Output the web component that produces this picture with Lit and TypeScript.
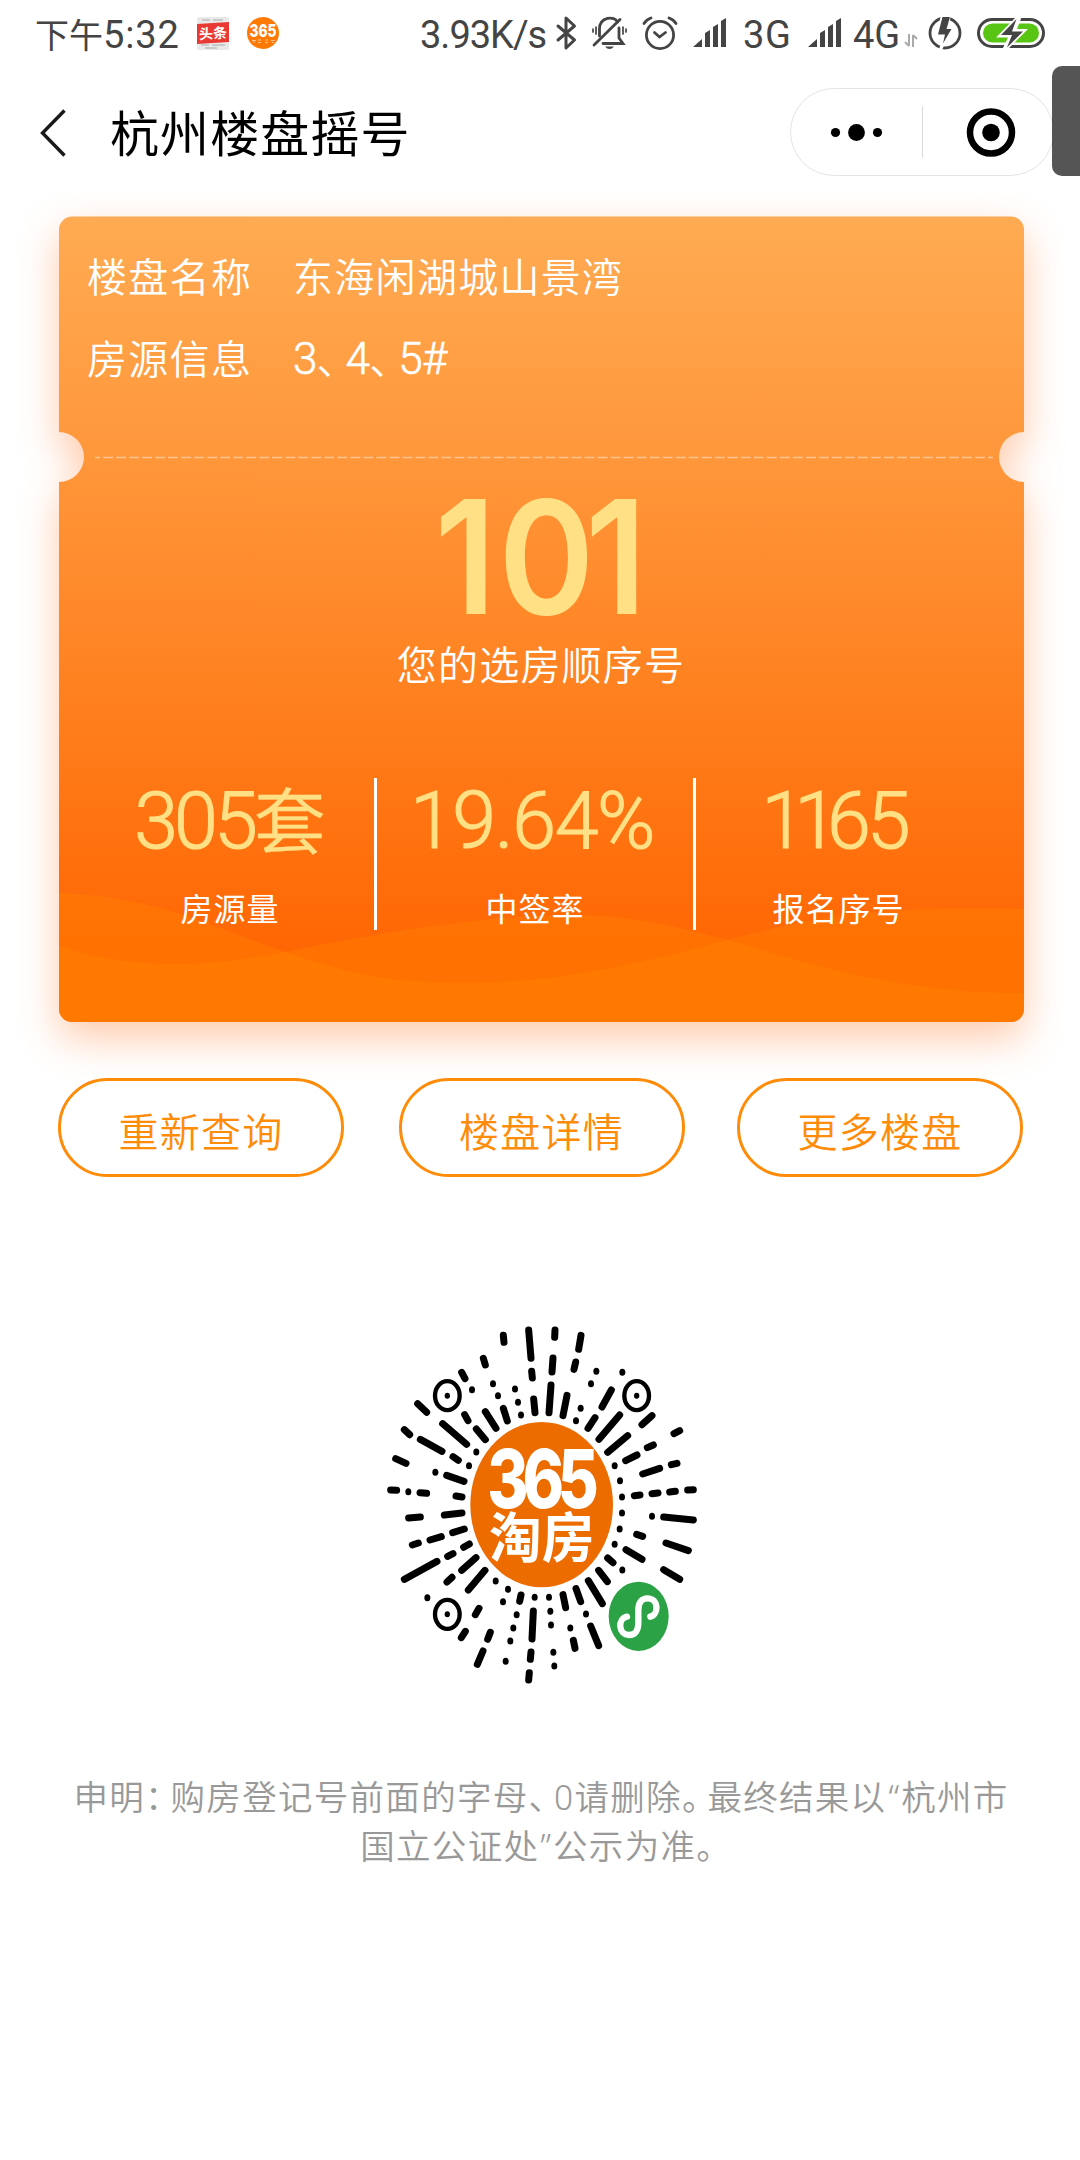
import { LitElement, html, svg, css } from "lit";
import { customElement } from "lit/decorators.js";

/* ---------- status bar ---------- */

@customElement("status-bar")
class StatusBar extends LitElement {
  static styles = css`
    :host { display: flex; height: 66px; box-sizing: border-box; align-items: center; padding-left: 35px; color: #444; font-family: Roboto, "Noto Sans CJK SC", sans-serif; font-size: 38px; line-height: 66px; }
    svg { display: block; flex: none; overflow: visible; }
    span { display: block; flex: none; white-space: nowrap; padding-top: 4px; }
    .time { width: 162px; letter-spacing: 0.9px; }
    .cn { display: inline; font-size: 34px; letter-spacing: 0; }
    .news { margin-right: 18px; }
    .speed { width: 136px; margin-left: 141px; letter-spacing: -1px; }
    .bt { margin-right: 15px; }
    .bell { margin-right: 15px; }
    .alarm { margin-right: 15px; }
    .net3 { width: 65px; margin-left: 16px; letter-spacing: 0.6px; }
    .net4 { width: 51px; margin-left: 11px; }
    .data { margin: 14px 10px 0 0; }
    .bolt { margin-right: 15px; }
  `;
  signal() {
    return html`<svg width="34" height="30" viewBox="0 0 34 30" fill="#444"><path d="M0 29L9 21V29ZM12 29V15L17 12V29ZM20 29V9L25 6V29ZM28 29V3L33 0V29Z" /></svg>`;
  }
  render() {
    return html`
      <span class="time"><span class="cn">下午</span>5:32</span>
      <svg class="news" width="32" height="33" viewBox="0 0 32 33">
        <rect width="32" height="33" rx="2" fill="#e9e9e9" />
        <path d="M5 3H13M16 3H26M4 28H12M15 28H28M8 31H20" stroke="#aaa" stroke-width="1.2" />
        <path d="M0 7L32 5V25L0 27Z" fill="#e83a33" />
        <text x="2" y="21.5" font-family="Noto Sans CJK SC, sans-serif" font-weight="700" font-size="14" fill="#fff" transform="rotate(-3 16 16)">头条</text>
      </svg>
      <svg width="32" height="32" viewBox="0 0 32 32">
        <circle cx="16" cy="16" r="16" fill="#ff7a05" />
        <text x="2.500" y="20" textLength="27" lengthAdjust="spacingAndGlyphs" font-family="Inter, sans-serif" font-weight="800" font-size="18" fill="#fff">365</text>
        <path d="M5 23.5H9M7 23.5V26M11 23H14M11 25.5H14M18 23H21M18 25.5H21M24 23.5H28M25 25.5H27" stroke="#ffc28a" stroke-width="1.1" />
      </svg>
      <span class="speed">3.93K/s</span>
      <svg class="bt" width="21" height="34" viewBox="0 0 21 34" fill="none" stroke="#444" stroke-width="3" stroke-linejoin="round" stroke-linecap="round"><path d="M2 10L18.500 24L10 32V2L18.500 10L2 24" /></svg>
      <svg class="bell" width="35" height="33" viewBox="0 0 35 33" fill="none" stroke="#444" stroke-width="2.8" stroke-linecap="round">
        <path d="M7.500 19V12C7.500 -0.500 23 -1.500 25.500 5M27 11V21L31 26.500H11" />
        <path d="M2 28L28 2.500" /><path d="M13 29.500H22Q20 32 17.500 32Q15 32 13 29.500Z" fill="#444" stroke="none" />
        <path d="M4 10V17M1 12V15M31 10V17M34 12V15" stroke-width="1.7" />
      </svg>
      <svg class="alarm" width="36" height="34" viewBox="0 0 36 34" fill="none" stroke="#444" stroke-width="2.8" stroke-linecap="round">
        <circle cx="18" cy="19" r="13.600" /><path d="M12.500 16.500L17.500 21L23.500 16.500M2 7.500Q4.500 3.500 9 2M34 7.500Q31.500 3.500 27 2" />
      </svg>
      ${this.signal()}
      <span class="net3">3G</span>
      ${this.signal()}
      <span class="net4">4G</span>
      <svg class="data" width="14" height="13" viewBox="0 0 14 13" fill="none" stroke="#aaa" stroke-width="2"><path d="M5 0V12M5 12L1 8M9 13V1M9 1L13 5" /></svg>
      <svg class="bolt" width="34" height="34" viewBox="0 0 34 34">
        <circle cx="17" cy="17" r="15" fill="none" stroke="#444" stroke-width="2.800" />
        <path d="M13 -1H23L20.500 11H25L14 34H11L14.500 20H8Z" fill="#fff" /><path d="M14.500 1H22L18.500 13H23.500L15 27.500L17 18.500H10Z" fill="#444" />
      </svg>
      <svg width="68" height="30" viewBox="0 0 68 30">
        <rect x="1.500" y="1.500" width="65" height="27" rx="13.500" fill="#fff" stroke="#444" stroke-width="3" />
        <rect x="6" y="5.500" width="56" height="19" rx="9.500" fill="#58c413" />
        <path d="M40 -2L19 19.500H31L25 32H30L51 11H40L45 -2Z" fill="#fff" /><path d="M39.500 1L24 17H35L30 29.500L46 13.500H35Z" fill="#444" />
      </svg>
    `;
  }
}

/* ---------- navigation bar ---------- */

@customElement("nav-bar")
class NavBar extends LitElement {
  static styles = css`
    :host { display: flex; height: 134px; align-items: center; padding-left: 40px; position: relative; box-sizing: border-box; }
    .back { flex: none; margin-right: 43px; }
    .title { flex: 1; font: 400 49px/1 "Noto Sans CJK SC", sans-serif; letter-spacing: 1.100px; color: #000; padding-bottom: 5px; }
    .capsule { flex: none; display: flex; align-items: center; width: 264px; height: 88px; box-sizing: border-box; border: 1px solid #e4e4e4; border-radius: 44px; margin-right: 26px; margin-bottom: 2px; }
    .tab { position: absolute; right: 0; top: 0; width: 28px; height: 110px; border-radius: 10px 0 0 10px; background: #555; }
  `;
  render() {
    return html`
      <svg class="back" width="27" height="48" viewBox="0 0 27 48" fill="none" stroke="#1a1a1a" stroke-width="3.400"><path d="M24.500 1.500L2.500 24L24.500 46.500" /></svg>
      <div class="title">杭州楼盘摇号</div>
      <div class="capsule">
        <svg width="262" height="86" viewBox="0 0 262 86">
          <circle cx="44.500" cy="43.500" r="4.600" /><circle cx="65.500" cy="43.500" r="8.400" /><circle cx="86.500" cy="43.500" r="4.600" />
          <rect x="131" y="17" width="1" height="52" fill="#d9d9d9" />
          <circle cx="200" cy="43.500" r="21" fill="none" stroke="#000" stroke-width="6.500" /><circle cx="200" cy="43.500" r="8.800" />
        </svg>
      </div>
      <div class="tab"></div>
    `;
  }
}

/* ---------- lottery ticket ---------- */

@customElement("lottery-ticket")
class LotteryTicket extends LitElement {
  static styles = css`
    :host { display: block; position: relative; height: 806px; margin: 16px 56px 0 59px; color: #fff; font-family: Roboto, "Noto Sans CJK SC", sans-serif; font-weight: 350; }
    .bg { position: absolute; left: 0; top: 0; overflow: visible; }
    .shape { filter: drop-shadow(0 16px 20px rgba(255, 115, 35, 0.38)); }
    .body { position: relative; height: 100%; display: flex; flex-direction: column; }
    .info { display: grid; grid-template-columns: 206px 1fr; grid-auto-rows: 82px; align-items: center; height: 241px; box-sizing: border-box; padding: 18px 0 0 28px; font-size: 40px; letter-spacing: 1.3px; }
    .houses { font-size: 44px; letter-spacing: -0.800px; -webkit-text-stroke: 0.600px #fff; }
    .comma { font-size: 40px; font-feature-settings: "halt"; letter-spacing: 9px; -webkit-text-stroke: 0; }
    .rank { text-align: center; }
    .number { font-family: Inter, sans-serif; font-weight: 600; font-size: 158px; line-height: 115px; height: 115px; margin-top: 42px; padding-right: 12px; color: #ffe085; letter-spacing: -10px; transform: scaleX(0.92); }
    .wide { letter-spacing: 3px; }
    .caption { font-size: 40px; letter-spacing: 1.200px; line-height: 50px; margin-top: 28px; padding-right: 1px; }
    .stats { display: flex; height: 152px; margin-top: 86px; }
    .stat { display: flex; flex-direction: column; align-items: center; box-sizing: border-box; }
    .stat + .stat { border-left: 3px solid #fff; }
    .s0 { width: 315px; padding-left: 27px; }
    .s1 { width: 319px; }
    .s2 { width: 320px; padding-right: 32px; }
    .value { font-size: 79px; line-height: 86px; height: 84px; letter-spacing: -4px; color: #ffe085; white-space: nowrap; -webkit-text-stroke: 1.200px #ffe085; }
    .rate { letter-spacing: -1.400px; padding-right: 6px; }
    .serial { padding-right: 9px; }
    .ones { letter-spacing: -11px; }
    .unit { font-size: 72px; letter-spacing: 0; -webkit-text-stroke: 0.400px #ffe085; }
    .label { font-size: 32px; letter-spacing: 1px; line-height: 40px; margin-top: 28px; font-weight: 400; }
  `;
  render() {
    return html`
      <svg class="bg" width="965" height="806" viewBox="0 0 964 806" preserveAspectRatio="none">
        <defs>
          <linearGradient id="g" x1="0" y1="0" x2="0" y2="1">
            <stop offset="0" stop-color="#ffab53" /><stop offset="0.34" stop-color="#ff9437" /><stop offset="0.65" stop-color="#ff7c1a" /><stop offset="0.9" stop-color="#ff6704" /><stop offset="1" stop-color="#ff6500" />
          </linearGradient>
          <clipPath id="c"><rect width="964" height="806" rx="13" /></clipPath>
        </defs>
        <path class="shape" fill="url(#g)" d="M13 0.500H951A13 13 0 0 1 964 13V216A25 25 0 0 0 964 266V793A13 13 0 0 1 951 806H13A13 13 0 0 1 0 793V266A25 25 0 0 0 0 216V13A13 13 0 0 1 13 0.500Z" />
        <g clip-path="url(#c)" fill="#ff8c00" fill-opacity="0.3">
          <path d="M0 677C100 680 160 714 226 736C300 762 340 767 410 767C500 767 590 745 668 724C760 699 820 690 964 693V806H0Z" />
          <path d="M0 730C60 750 130 755 226 736C330 714 430 699 510 699C570 699 610 709 668 724C760 752 850 778 964 777V806H0Z" />
        </g>
        <path d="M36 241.500H933" stroke="#fff" stroke-opacity="0.45" stroke-width="1.600" stroke-dasharray="10 3" stroke-dashoffset="5" />
      </svg>
      <div class="body">
        <div class="info">
          <span>楼盘名称</span><span>东海闲湖城山景湾</span>
          <span>房源信息</span><span class="houses">3<span class="comma">、</span>4<span class="comma">、</span>5#</span>
        </div>
        <div class="rank">
          <div class="number"><span class="wide">1</span>01</div>
          <div class="caption">您的选房顺序号</div>
        </div>
        <div class="stats">
          <div class="stat s0"><div class="value">305<span class="unit">套</span></div><div class="label">房源量</div></div>
          <div class="stat s1"><div class="value rate">19.64%</div><div class="label">中签率</div></div>
          <div class="stat s2"><div class="value serial"><span class="ones">11</span>65</div><div class="label">报名序号</div></div>
        </div>
      </div>
    `;
  }
}

/* ---------- mini program code ---------- */

// Rays of the code as [x1, y1, x2, y2].
const RAYS: number[][] = [
  [400,76,402,97],[476,60,483,145],[555,60,554,82],[633,76,626,118],[340,145,346,165],[275,187,285,206],[485,184,487,204],[549,144,546,186],[617,156,612,178],
  [143,281,170,307],[491,267,495,308],[543,225,537,308],[591,256,579,317],[400,295,412,333],[346,305,378,355],[284,314,294,332],[218,341,290,403],[319,357,346,389],
  [724,240,696,291],[749,315,687,388],[675,323,654,355],[846,317,816,344],[103,359,119,374],[151,388,216,424],[249,440,265,451],[77,446,108,460],[230,496,282,514],
  [62,540,80,541],[150,548,170,550],[258,558,276,561],[116,624,151,621],[223,615,276,609],[127,705,145,699],[180,690,214,680],[248,668,283,657],[103,808,201,754],
  [233,739,249,731],[281,712,298,702],[275,781,318,743],[231,816,246,802],[295,840,345,781],[912,371,929,362],[773,377,713,427],[832,413,850,405],[767,452,801,435],
  [818,492,869,475],[904,464,921,460],[793,557,810,555],[846,551,864,549],[899,546,916,544],[953,540,970,539],[881,621,970,630],[800,673,818,679],[888,699,955,722],
  [768,719,816,748],[713,744,729,758],[881,779,929,808],[686,781,712,815],[655,812,697,881],[453,855,449,874],[579,854,587,893],[618,836,632,875],[490,903,486,987],
  [483,1026,481,1048],[478,1088,476,1110],[662,948,686,1007],[610,991,615,1015],[327,895,316,914],[286,964,274,983],[361,967,353,988],[339,1023,322,1063],
];
const DOTS: number[][] = [
  [306,239],[369,221],[384,257],[435,237],[444,277],[453,315],[679,184],[757,187],[663,221],[632,295],[618,332],[319,426],[297,467],[196,487],[115,545],
  [734,467],[750,512],[756,561],[756,609],[749,657],[734,703],[846,619],[757,780],[377,813],[414,838],[399,875],[494,862],[537,862],[440,914],[430,954],
  [421,993],[407,1054],[541,904],[543,945],[550,1027],[553,1068],[648,912],[601,954],[172,863],
];
const RINGS: number[][] = [[232,257],[800,257],[232,913]];

@customElement("program-code")
class ProgramCode extends LitElement {
  static styles = css`
    :host { display: block; width: 350px; height: 390px; margin: 133px 0 0 370px; }
    svg { display: block; }
  `;
  render() {
    return html`
      <svg width="350" height="390" viewBox="0 0 1050 1170">
        <g stroke="#000" stroke-width="21" stroke-linecap="round">${RAYS.map(([a, b, c, d]) => svg`<line x1=${a} y1=${b} x2=${c} y2=${d} />`)}</g>
        ${DOTS.map(([x, y]) => svg`<ellipse cx=${x} cy=${y} rx="9" ry="10.500" />`)}
        ${RINGS.map(([x, y]) => svg`<ellipse cx=${x} cy=${y} rx="37" ry="43.500" fill="none" stroke="#000" stroke-width="13" /><ellipse cx=${x} cy=${y} rx="8" ry="9" />`)}
        <ellipse cx="515" cy="584" rx="214" ry="248" fill="#ec6c00" />
        <text transform="translate(352 595) scale(0.780 1)" letter-spacing="-24" font-family="Inter, sans-serif" font-weight="800" font-size="242" fill="#fff">365</text>
        <text transform="translate(357 743) scale(1 1.040)" textLength="316" lengthAdjust="spacingAndGlyphs" font-family="Noto Sans CJK SC, sans-serif" font-weight="700" font-size="156" fill="#fff">淘房</text>
        <ellipse cx="806" cy="919" rx="90" ry="104" fill="#2ba245" />
        <path d="M841 920C866 914 868 865 832 865C814 865 805 880 805 900V938C805 960 796 975 778 975C744 975 742 926 771 920" fill="none" stroke="#fff" stroke-width="19" stroke-linecap="round" />
      </svg>
    `;
  }
}

/* ---------- page ---------- */

@customElement("app-root")
class AppRoot extends LitElement {
  static styles = css`
    :host { display: flex; flex-direction: column; width: 1080px; height: 2160px; background: #fff; overflow: hidden; }
    .actions { display: flex; justify-content: space-between; margin: 56px 57px 0 58px; }
    .action { width: 286px; height: 99px; box-sizing: border-box; border: 3px solid #ff8c08; border-radius: 50px; background: none; padding: 4px 0 0; color: #ff8c08; font: 350 40px/1 "Noto Sans CJK SC", sans-serif; letter-spacing: 1.300px; }
    .action:nth-child(2) { margin-left: 2px; }
    .note { margin: 74px 0 0; padding-left: 2px; text-align: center; font: 350 34.500px/49px Roboto, "Noto Sans CJK SC", sans-serif; letter-spacing: 1.300px; color: #999; white-space: nowrap; }
    .tight { letter-spacing: -9px; }
    .open, .close { font-family: "Noto Sans", sans-serif; line-height: 1; }
    .open { letter-spacing: 2px; margin-left: 2px; }
    .close { letter-spacing: 2px; margin-left: 1px; }
  `;
  render() {
    return html`
      <status-bar></status-bar>
      <nav-bar></nav-bar>
      <lottery-ticket></lottery-ticket>
      <div class="actions">
        ${["重新查询", "楼盘详情", "更多楼盘"].map((t) => html`<button class="action">${t}</button>`)}
      </div>
      <program-code></program-code>
      <p class="note">申明<span class="tight">：</span>购房登记号前面的字母<span class="tight">、</span>0请删除<span class="tight">。</span>最终结果以<span class="open">“</span>杭州市<br />国立公证处<span class="close">”</span>公示为准<span class="tight">。</span></p>
    `;
  }
}
